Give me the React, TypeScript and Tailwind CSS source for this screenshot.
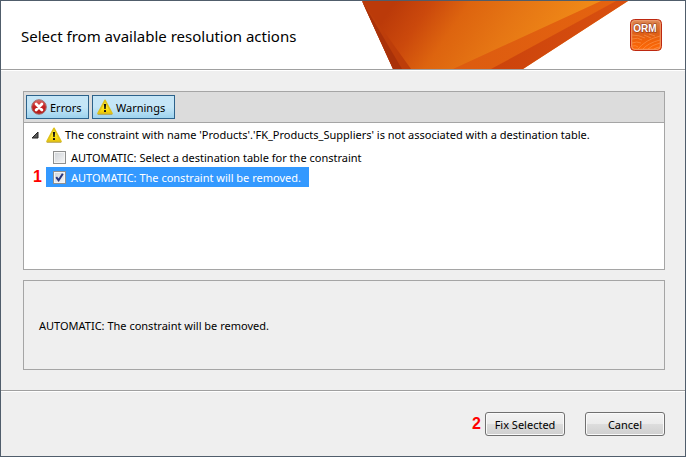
import { useState } from "react";

function WarningIcon() {
  return (
    <svg viewBox="0 0 16 16" className="size-4 shrink-0" aria-hidden="true">
      <defs>
        <linearGradient id="warn" x1="0" y1="0" x2="0" y2="1">
          <stop offset="0" stopColor="#fff35a" />
          <stop offset="0.55" stopColor="#ffe81c" />
          <stop offset="1" stopColor="#f2c800" />
        </linearGradient>
      </defs>
      <path d="M8 1.4 14.9 14.4H1.1Z" fill="url(#warn)" stroke="#dfc21a" strokeWidth="1.8" strokeLinejoin="round" />
      <path d="M0.8 15.4H15.2" stroke="#a98f3a" strokeWidth="0.7" />
      <path d="M6.9 5h2.2l-.4 5H7.3Z" fill="#111" />
      <rect x="7" y="11" width="2" height="2" rx="0.5" fill="#111" />
    </svg>
  );
}

function ErrorIcon() {
  return (
    <svg viewBox="0 0 16 16" className="size-4 shrink-0" aria-hidden="true">
      <defs>
        <linearGradient id="err" x1="0" y1="0" x2="0" y2="1">
          <stop offset="0" stopColor="#dd6a66" />
          <stop offset="0.5" stopColor="#c4201f" />
          <stop offset="1" stopColor="#b3201c" />
        </linearGradient>
      </defs>
      <circle cx="8" cy="8" r="7.3" fill="url(#err)" stroke="#a07070" strokeWidth="1" />
      <path d="m5.1 5.1 5.8 5.8M10.9 5.1l-5.8 5.8" stroke="#fff" strokeWidth="2.8" strokeLinecap="round" />
    </svg>
  );
}

function HeaderArt() {
  return (
    <svg viewBox="0 0 266 68" className="absolute top-0 right-[57px] h-[68px] w-[266px]" aria-hidden="true">
      <defs>
        <linearGradient id="main" gradientUnits="userSpaceOnUse" x1="10" y1="0" x2="170" y2="110">
          <stop offset="0.1" stopColor="#bb3a09" />
          <stop offset="0.26" stopColor="#cb490c" />
          <stop offset="0.42" stopColor="#dd640f" />
          <stop offset="0.65" stopColor="#e67614" />
          <stop offset="1" stopColor="#f28d18" />
        </linearGradient>
        <linearGradient id="band" x1="0" y1="0" x2="1" y2="0">
          <stop offset="0" stopColor="#dc5b10" />
          <stop offset="1" stopColor="#e5630f" />
        </linearGradient>
        <linearGradient id="edge" x1="0" y1="0" x2="1" y2="0">
          <stop offset="0" stopColor="#cb430c" />
          <stop offset="1" stopColor="#d9500f" />
        </linearGradient>
      </defs>
      <path d="M0 0H266L161 68H31Z" fill="url(#main)" />
      <path d="M0 0 49 68H31Z" fill="#bd3d0a" />
      <path d="M0 0 40 68H31Z" fill="#a93109" />
      <path d="M239 0H255L130 68H91Z" fill="url(#band)" />
      <path d="M254 0H266L161 68H129Z" fill="url(#edge)" />
    </svg>
  );
}

function OrmLogo() {
  return (
    <svg viewBox="0 0 32 32" className="relative size-8" role="img" aria-label="ORM">
      <defs>
        <linearGradient id="orm" x1="0" y1="0" x2="0" y2="1">
          <stop offset="0" stopColor="#dc8a55" />
          <stop offset="0.4" stopColor="#d9601c" />
          <stop offset="0.7" stopColor="#f26208" />
          <stop offset="1" stopColor="#ff6a08" />
        </linearGradient>
        <clipPath id="ormclip"><rect x="2" y="2" width="28" height="28" rx="3" /></clipPath>
      </defs>
      <rect x="0.5" y="0.5" width="31" height="31" rx="4" fill="url(#orm)" stroke="#bd2810" />
      <rect x="1.7" y="1.7" width="28.6" height="28.6" rx="3" fill="none" stroke="#f2a377" strokeWidth="0.9" />
      <g clipPath="url(#ormclip)" fill="none" stroke="#ffa25e" strokeWidth="0.8" opacity="0.65">
        <path d="M2 16q7 0 13 3M2 20q6-2 10 1M2 24q5-2 9 0M8 30q7-9 22-13M13 30q5-6 17-9M18 30q4-4 12-6M24 30q3-2 6-2M14 16l7 3M19 15l6 2M2 27q4-1 6 1" />
      </g>
      <text x="15" y="13" textAnchor="middle" fill="#fff" stroke="#8b3519" strokeWidth="1" paintOrder="stroke" className="font-['Liberation_Sans',sans-serif] text-[10px] font-bold">ORM</text>
    </svg>
  );
}

function FilterButton({ label, width, children }: { label: string; width: string; children: React.ReactNode }) {
  const [on, setOn] = useState(true);
  return (
    <button
      type="button"
      aria-pressed={on}
      onClick={() => setOn(!on)}
      className={`flex h-6 items-center gap-[3px] border border-[#2c628b] bg-linear-to-b from-[#c5e6f7] from-50% to-[#9dd3ee] pl-1 leading-4 ${width}`}
    >
      {children}
      <span className="pt-px">{label}</span>
    </button>
  );
}

function ActionItem({ label, checked, selected, step, onToggle }: { label: string; checked: boolean; selected?: boolean; step?: string; onToggle: () => void }) {
  return (
    <li className="flex items-center">
      <span className="w-[22px] pl-[9px] font-['Liberation_Sans',sans-serif] text-[16px] leading-5 font-bold text-[#f00]">{step}</span>
      <label className={`flex h-5 items-center gap-[5px] pr-2 pl-[7px] ${selected ? "bg-[#3399ff] text-white" : ""}`}>
        <span className="relative grid size-[13px] place-items-center">
          <input
            type="checkbox"
            checked={checked}
            onChange={onToggle}
            className="size-[13px] appearance-none border border-[#8e8f8f] bg-linear-to-br from-[#cfd3d8] to-[#f6f6f6] shadow-[inset_0_0_0_1px_#f4f4f4]"
          />
          {checked && (
            <svg viewBox="0 0 13 13" className="pointer-events-none absolute inset-0 size-[13px]" aria-hidden="true">
              <path d="M3.2 6.2 5.6 9.2 9.8 2.8" fill="none" stroke="#28347a" strokeWidth="2" />
            </svg>
          )}
        </span>
        <span className="pt-px">{label}</span>
      </label>
    </li>
  );
}

const dialogButton =
  "h-6 w-20 rounded-[3px] border border-[#707070] bg-[linear-gradient(#f3f3f3,#ebebeb_50%,#dddddd_50%,#cfcfcf)] pt-px leading-4 shadow-[inset_0_0_0_1px_#fafafa]";

export default function App() {
  const [associate, setAssociate] = useState(false);
  const [remove, setRemove] = useState(true);
  return (
    <main className="flex min-h-screen flex-col border border-[#505d6b] bg-[#efefef] font-['Noto_Sans',sans-serif] text-[11px] leading-4 text-black">
      <header className="relative flex h-[69px] items-center justify-between border-b border-[#a0a0a0] bg-white pr-[23px] pb-px pl-5">
        <HeaderArt />
        <h1 className="relative pt-[3px] text-[15px] leading-6">Select from available resolution actions</h1>
        <OrmLogo />
      </header>

      <div className="flex grow flex-col gap-[10px] border-t border-white pt-5 pr-5 pb-5 pl-[22px]">
        <section className="grow border border-[#a5a5a5] bg-white">
          <div className="flex gap-[3px] border-b border-[#a5a5a5] bg-[#dcdcdc] px-[2px] py-[3px]">
            <FilterButton label="Errors" width="w-[63px]"><ErrorIcon /></FilterButton>
            <FilterButton label="Warnings" width="w-[83px]"><WarningIcon /></FilterButton>
          </div>
          <div className="flex h-6 items-center pl-[7px]">
            <svg viewBox="0 0 8 8" className="mr-[7px] size-2" aria-hidden="true">
              <path d="M7 1V7H1Z" fill="#595959" stroke="#262626" />
            </svg>
            <WarningIcon />
            <span className="ml-[3px]">The constraint with name 'Products'.'FK_Products_Suppliers' is not associated with a destination table.</span>
          </div>
          <ul>
            <ActionItem label="AUTOMATIC: Select a destination table for the constraint" checked={associate} onToggle={() => setAssociate(!associate)} />
            <ActionItem label="AUTOMATIC: The constraint will be removed." checked={remove} selected step="1" onToggle={() => setRemove(!remove)} />
          </ul>
        </section>
        <section className="flex h-[90px] items-center border border-[#a5a5a5] px-[15px] pt-px">
          <p>AUTOMATIC: The constraint will be removed.</p>
        </section>
      </div>

      <footer className="border-t border-[#a0a0a0]">
        <div className="flex h-[65px] items-center justify-end border-t border-white px-5">
          <span className="mr-1 font-['Liberation_Sans',sans-serif] text-[16px] font-bold text-[#f00]">2</span>
          <button type="button" className={`${dialogButton} mr-5`}>Fix Selected</button>
          <button type="button" className={dialogButton}>Cancel</button>
        </div>
      </footer>
    </main>
  );
}
